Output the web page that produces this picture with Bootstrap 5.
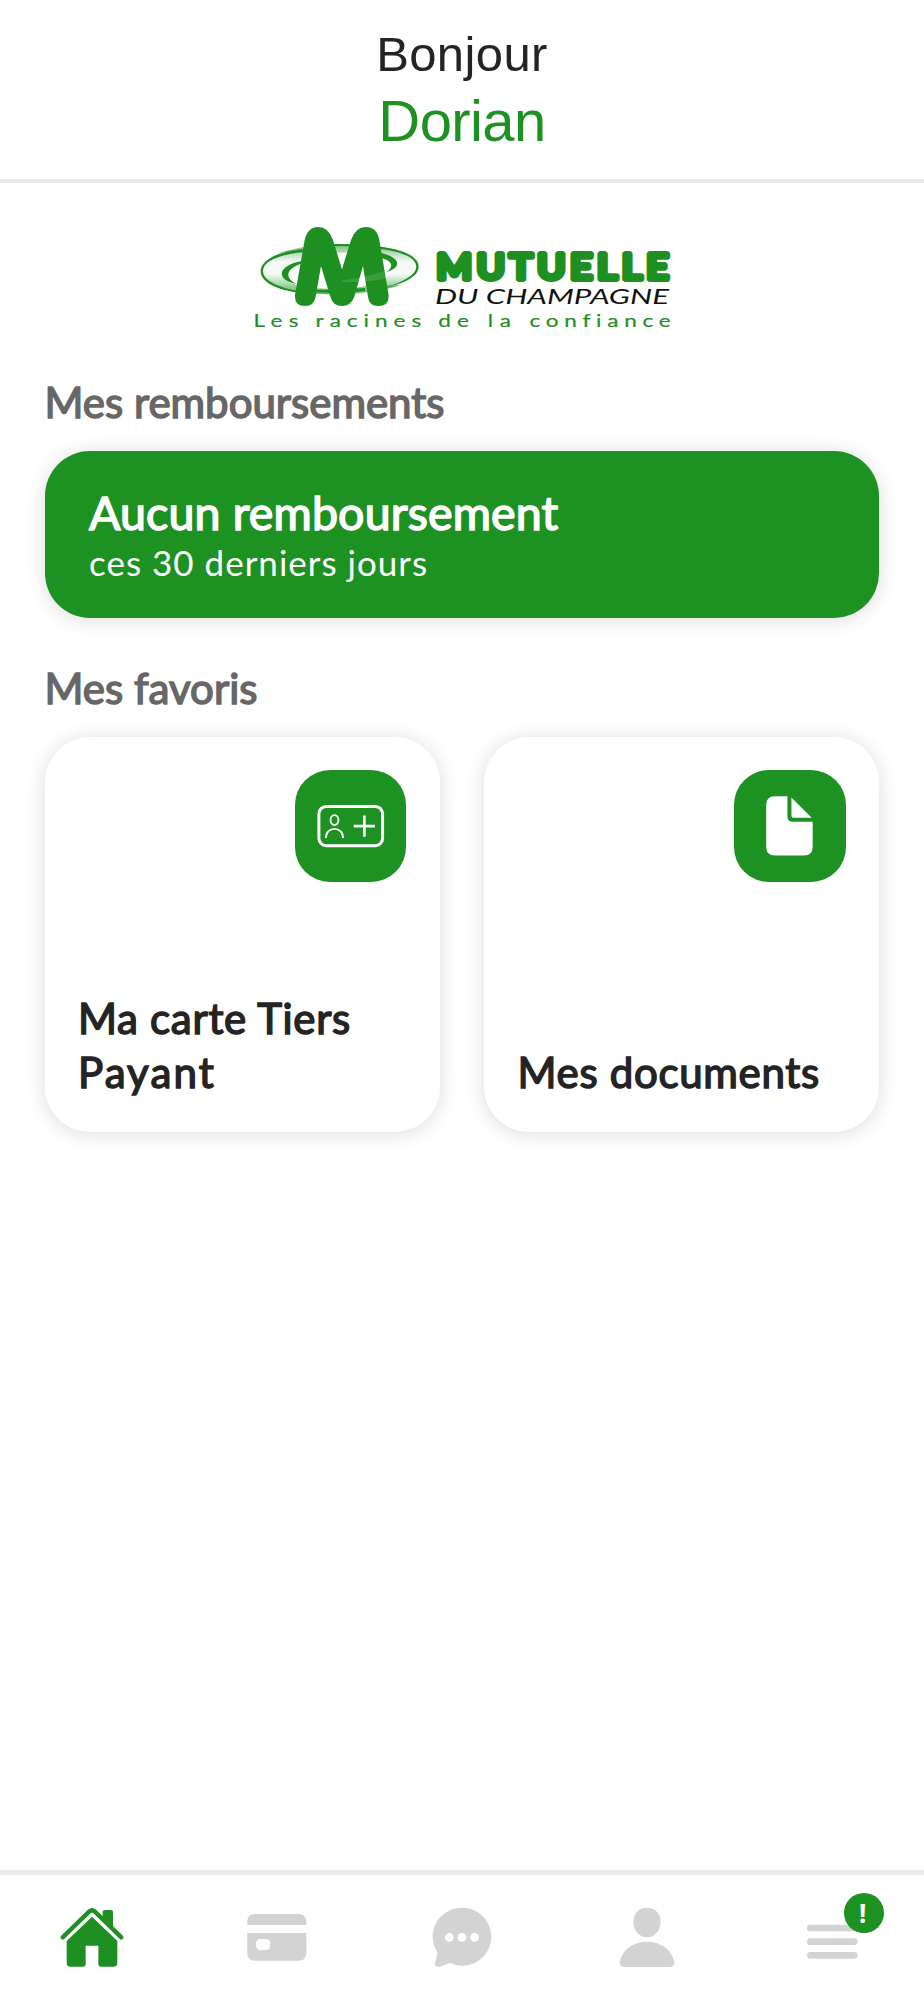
<!DOCTYPE html>
<html lang="fr">
<head>
<meta charset="utf-8">
<meta name="viewport" content="width=device-width, initial-scale=1">
<title>Mutuelle du Champagne</title>
<link rel="stylesheet" href="https://cdn.jsdelivr.net/npm/bootstrap@5.3.0/dist/css/bootstrap.min.css">
<style>
:root{--brand:#1d9122;--ink:#242424;--off:#d3d3d3}
body{font-family:Lato,sans-serif;color:var(--ink);background:#fff}
.screen{height:2000px}
.greeting{height:183px;border-bottom:4px solid #ebebeb;font-family:"Liberation Sans",sans-serif;padding-top:25px}
.hello{font-size:49px;line-height:59px;letter-spacing:.4px}
.who{font-size:58px;line-height:73px;color:var(--brand);letter-spacing:-.6px}
.content{padding:37px 45px 0 44.5px}
.section-title,.refund-title,.fav-title{font-weight:400;-webkit-text-stroke:1.5px currentColor}
.section-title{font-size:42px;line-height:50px;color:#676767;margin:0}
.title-first{margin-top:40.7px}
.title-next{margin-top:45px}
.tile{border-radius:45px;box-shadow:0 2px 20px rgba(0,0,0,.14);background:#fff}
.refund{background:var(--brand);height:167px;padding:35px 44.5px;margin-top:24.3px}
.refund-title{font-size:46.5px;line-height:52px;letter-spacing:.15px}
.refund-sub{font-size:35px;line-height:48px;letter-spacing:1px}
.favs{gap:44.5px;margin-top:24.5px}
.fav{height:394.5px;padding:33px 33.5px 32.5px;flex:1}
.fav-icon{width:111.5px;height:111.5px;border-radius:35px;background:var(--brand)}
.fav-title{font-size:42px;line-height:53.5px;letter-spacing:.7px}
.fav-word{letter-spacing:2.1px}
.tabs{height:130px;border-top:5px solid #ebebeb;color:var(--off);padding-top:30px}
.tab{width:20%}
.alert-dot{left:843.5px;top:1892.5px;width:40.5px;height:40.5px;background:var(--brand);font:700 26px/41px "Noto Sans",sans-serif;padding-right:2px}
.logo text{font-family:Lato,sans-serif}
.tagline text{font-variant-ligatures:none}
</style>
</head>
<body>
<div class="screen position-relative d-flex flex-column overflow-hidden">
<header class="greeting text-center flex-shrink-0">
<div class="hello">Bonjour</div>
<div class="who">Dorian</div>
</header>
<main class="content flex-grow-1">
<svg class="logo d-block mx-auto" width="434" height="116" viewBox="245 220 434 116" role="img" aria-label="Mutuelle du Champagne">
<defs>
<linearGradient id="halo" x1="0" y1="0" x2="0" y2="1"><stop offset="0" stop-color="#1e9022" stop-opacity=".6"/><stop offset=".35" stop-color="#1e9022" stop-opacity=".05"/><stop offset=".6" stop-color="#1e9022" stop-opacity=".05"/><stop offset="1" stop-color="#1e9022" stop-opacity=".7"/></linearGradient>
</defs>
<g transform="translate(245 215) scale(.3333)">
<path fill="url(#halo)" fill-rule="evenodd" d="M48 168C48 118 160 88 290 87C420 86 520 115 520 155C520 205 400 237 270 238C150 238 48 212 48 168ZM115 182C115 208 190 222 280 222C380 221 455 185 455 148C455 125 380 112 290 113C190 115 115 148 115 182Z"/>
<path fill="#1e9022" d="M175 112C100 118 54 140 54 168C54 200 110 222 190 233L190 237C105 230 47 205 47 169C47 133 105 108 175 104ZM380 92C460 98 521 120 521 155C521 185 475 205 425 216C480 198 514 178 514 155C514 125 460 106 380 98ZM175 145C120 160 118 190 155 207C90 195 95 150 175 137ZM400 112C465 125 475 155 425 172C450 152 440 135 400 127ZM250 88Q290 85 330 90L330 96Q290 90 250 95ZM215 232Q290 236 360 228L360 219Q290 226 215 224Z"/>
<path fill="#1e9022" opacity=".5" d="M100 113Q150 102 190 99L190 110Q150 109 100 113ZM400 211Q440 212 470 210Q440 220 400 226Z"/>
<path fill="#1e9022" d="M150 240L179 75Q188 36 220 36Q250 36 264 75L291 163L318 75Q332 36 362 36Q396 36 403 75L431 240Q433 273 400 273Q372 273 369 245L354 153L328 245Q318 273 291 273Q264 273 256 245L228 153L212 245Q207 273 180 273Q148 273 150 240Z"/>
<path fill="#fff" opacity=".12" d="M290 196Q350 190 420 168L424 190Q360 205 290 200Z"/>
</g>
<g fill="#1e9022">
<text x="436.500" y="279" font-weight="400" font-size="34" textLength="237" lengthAdjust="spacingAndGlyphs" stroke="#1e9022" stroke-width="6" stroke-linejoin="round" stroke-linecap="round" letter-spacing="4.500">MUTUELLE</text>
<g class="tagline" font-size="18" stroke="#1e9022" stroke-width=".2" transform="translate(0 327.300) scale(1.25 1)">
<text x="202.800" y="0" textLength="36">Les</text>
<text x="252.500" y="0" textLength="84.500">racines</text>
<text x="350.600" y="0" textLength="24.500">de</text>
<text x="390.200" y="0" textLength="18.500">la</text>
<text x="423.600" y="0" textLength="113">confiance</text>
</g></g>
<text x="435" y="303.500" font-style="italic" font-size="21" fill="#111" textLength="234" lengthAdjust="spacingAndGlyphs">DU CHAMPAGNE</text>
</svg>
<h2 class="section-title title-first">Mes remboursements</h2>
<section class="tile refund text-white">
<div class="refund-title">Aucun remboursement</div>
<div class="refund-sub">ces 30 derniers jours</div>
</section>
<h2 class="section-title title-next">Mes favoris</h2>
<section class="favs d-flex">
<div class="tile fav d-flex flex-column justify-content-between">
<div class="fav-icon align-self-end"><svg class="d-block w-100 h-100" viewBox="29 29 336 336" fill="none" stroke="#fff"><rect x="101" y="139" width="192" height="118" rx="22" stroke-width="9"/><ellipse cx="148" cy="180" rx="12" ry="15" stroke-width="5.500"/><path stroke-width="5.500" d="M122 234C122 197 174 197 174 234"/><path stroke-width="8" d="M206 198H270M238 166V230"/></svg></div>
<div class="fav-title">Ma carte Tiers<br><span class="fav-word">Payant</span></div>
</div>
<div class="tile fav d-flex flex-column justify-content-between">
<div class="fav-icon align-self-end"><svg class="d-block w-100 h-100" viewBox="28 29 336 336" fill="#fff"><path d="M151 108H189V168Q189 185 206 185H265V261Q265 287 239 287H151Q125 287 125 261V134Q125 108 151 108Z"/><path d="M201 112L262 173H209Q201 173 201 165Z"/></svg></div>
<div class="fav-title">Mes documents</div>
</div>
</section>
</main>
<nav class="tabs d-flex flex-shrink-0 align-items-start text-center">
<div class="tab"><svg width="66" height="66" viewBox="56 120 198 198" fill="#1e9022"><path d="M187 155V141Q187 135 193 135H212Q218 135 218 141V187Z"/><path fill="none" stroke="#1e9022" stroke-width="13" stroke-linecap="round" stroke-linejoin="round" d="M67 217L147 139Q155 132 163 139L243 217"/><path d="M79 228L155 155L231 228V293Q231 305 219 305H181Q174 305 174 298V242H136V298Q136 305 129 305H91Q79 305 79 293Z"/></svg></div>
<div class="tab"><svg width="66" height="66" viewBox="612 120 198 198" fill="currentColor"><path d="M622 180V171Q622 147 646 147H775Q799 147 799 171V180Z"/><path fill-rule="evenodd" d="M622 204H799V263Q799 287 775 287H646Q622 287 622 263ZM662 222Q648 222 648 236V241Q648 255 662 255H677Q691 255 691 241V236Q691 222 677 222Z"/></svg></div>
<div class="tab"><svg width="66" height="66" viewBox="57 120 198 198" fill="currentColor"><path d="M156 128C205 128 244 167 244 215S205 302 156 302Q137 302 119 294L90 305Q74 308 75 294L83 263C74 248 68 233 68 215C68 167 107 128 156 128Z"/><g fill="#fff"><circle cx="118" cy="217" r="13"/><circle cx="156" cy="217" r="13"/><circle cx="194" cy="217" r="13"/></g></svg></div>
<div class="tab"><svg width="66" height="66" viewBox="613 120 198 198" fill="currentColor"><path d="M712 128C736 128 753 146 753 170C753 197 734 217 712 217S671 197 671 170C671 146 688 128 712 128Z"/><path d="M642 306Q630 305 630 292C638 251 674 230 712 230S786 251 794 292Q794 305 782 306Z"/></svg></div>
<div class="tab"><svg width="66" height="66" viewBox="57 120 198 198" fill="none" stroke="currentColor" stroke-width="20" stroke-linecap="round"><path d="M91 189H223M91 230H223M91 271H223"/></svg></div>
</nav>
<span class="alert-dot position-absolute rounded-circle text-white text-center">!</span>
</div>
<script src="https://cdn.jsdelivr.net/npm/bootstrap@5.3.0/dist/js/bootstrap.bundle.min.js"></script>
</body>
</html>
